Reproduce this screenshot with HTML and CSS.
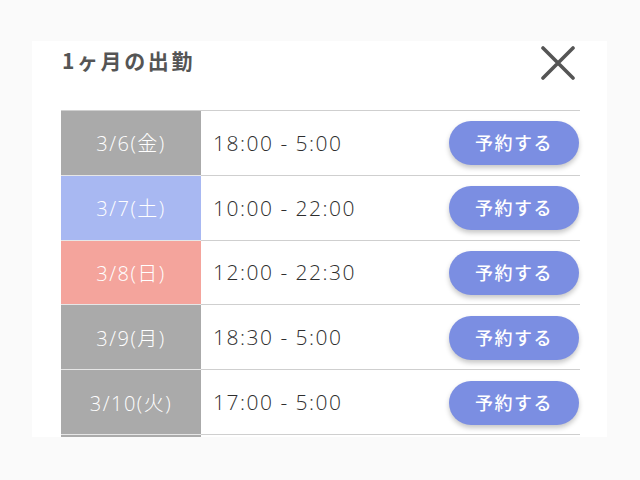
FILE: index.html
```html
<!DOCTYPE html>
<html lang="ja">
<head>
<meta charset="utf-8">
<link rel="stylesheet" href="styles.css">
</head>
<body>
<div class="panel">
  <div class="header">
    <h1 class="title">1ヶ月の出勤</h1>
    <button class="close" aria-label="閉じる">
      <svg width="34" height="34" viewBox="0 0 34 34"><path d="M2 2 L32 32 M32 2 L2 32" stroke="#555" stroke-width="3.6" stroke-linecap="round" fill="none"/></svg>
    </button>
  </div>
  <div class="table">
    <div class="row"><div class="date gray">3/6(金)</div><div class="cell"><span class="time">18:00 - 5:00</span><button class="reserve">予約する</button></div></div>
    <div class="row"><div class="date blue">3/7(土)</div><div class="cell"><span class="time">10:00 - 22:00</span><button class="reserve">予約する</button></div></div>
    <div class="row"><div class="date red">3/8(日)</div><div class="cell"><span class="time">12:00 - 22:30</span><button class="reserve">予約する</button></div></div>
    <div class="row"><div class="date gray">3/9(月)</div><div class="cell"><span class="time">18:30 - 5:00</span><button class="reserve">予約する</button></div></div>
    <div class="row"><div class="date gray">3/10(火)</div><div class="cell"><span class="time">17:00 - 5:00</span><button class="reserve">予約する</button></div></div>
    <div class="row"><div class="date gray"></div><div class="cell"></div></div>
  </div>
</div>
</body>
</html>
```
FILE: styles.css
```css
html, body {
  margin: 0;
  padding: 0;
  background: #fafafa;
}
body {
  font-family: "Open Sans", "Noto Sans CJK JP", sans-serif;
  padding-top: 41px;
  padding-left: 32px;
}
.panel {
  width: 575px;
  height: 396px;
  background: #fff;
  overflow: hidden;
  box-sizing: border-box;
  padding: 0 27px 0 29px;
}
.header {
  height: 69px;
  display: flex;
  justify-content: space-between;
  align-items: flex-start;
}
.title {
  margin: 4px 0 0 1px;
  font-family: "Noto Sans CJK JP", sans-serif;
  font-size: 21px;
  font-weight: 700;
  color: #555;
  line-height: 30px;
  letter-spacing: 2.6px;
}
.close {
  margin: 5px 5px 0 0;
  padding: 0;
  border: 0;
  background: none;
  width: 34px;
  height: 34px;
}
.table {
  border-top: 1px solid #cfcfcf;
}
.row {
  display: flex;
  height: 63.8px;
  border-bottom: 1px solid #cfcfcf;
}
.date {
  width: 140px;
  flex: none;
  display: flex;
  align-items: center;
  justify-content: center;
  color: #fff;
  font-size: 20px;
  font-weight: 300;
  letter-spacing: 1.5px;
  box-shadow: 0 1px 0 #e6e6e6;
}
.gray { background: #aaaaaa; }
.blue { background: #a8b8f2; }
.red { background: #f4a49c; }
.cell {
  flex: 1;
  display: flex;
  align-items: center;
  justify-content: space-between;
  padding-left: 12px;
  padding-right: 1px;
}
.time {
  font-size: 21px;
  font-weight: 300;
  color: #2e2e2e;
  letter-spacing: 1.5px;
}
.reserve {
  width: 130px;
  height: 44px;
  margin-top: 1px;
  border: 0;
  border-radius: 22px;
  background: #7b8ee2;
  color: #fff;
  font-family: "Noto Sans CJK JP", sans-serif;
  font-size: 18px;
  font-weight: 500;
  line-height: 40px;
  padding-bottom: 4px;
  letter-spacing: 1.5px;
  box-shadow: 0 3px 5px rgba(0,0,0,0.22);
}
```
